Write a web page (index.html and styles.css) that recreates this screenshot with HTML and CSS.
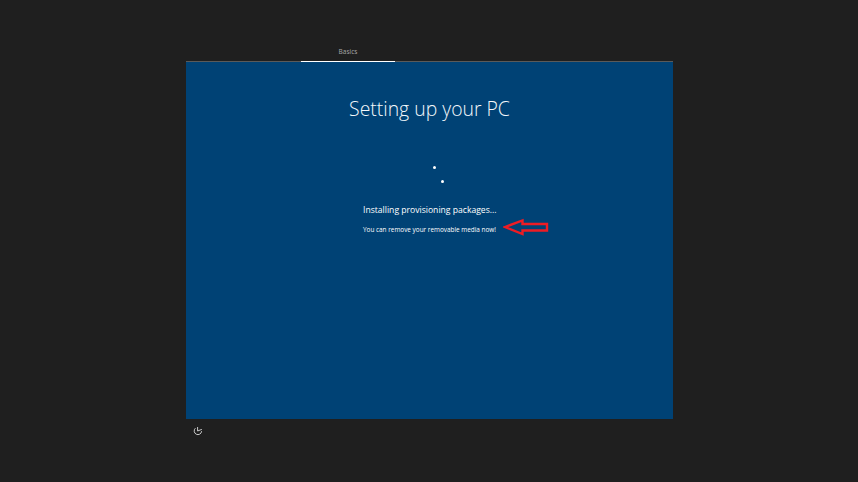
FILE: index.html
```html
<!DOCTYPE html>
<html lang="en">
<head>
<meta charset="utf-8">
<title>Setting up your PC</title>
<link rel="stylesheet" href="styles.css">
</head>
<body>
<div class="frame">
  <div class="tabs">
    <div class="tab">Basics</div>
  </div>
  <main class="panel">
    <h1 class="title">Setting up your PC</h1>
    <div class="spinner">
      <span class="dot dot-a"></span>
      <span class="dot dot-b"></span>
    </div>
    <div class="status">
      <p class="status-main">Installing provisioning packages...</p>
      <p class="status-note">You can remove your removable media now!</p>
      <svg class="arrow" width="46" height="18" viewBox="0 0 46 18" aria-hidden="true">
        <path d="M2 9 L19.5 2.5 V6 H44 V12.5 H19.5 V16 Z" fill="none" stroke="#ed1c24" stroke-width="2.4"/>
      </svg>
    </div>
  </main>
  <footer class="foot">
    <svg class="power" width="10" height="10" viewBox="0 0 10 10" aria-hidden="true">
      <path d="M2.4 2.2 A3.7 3.7 0 1 0 8.6 5.2" fill="none" stroke="#dcdcdc" stroke-width="0.9"/>
      <path d="M4.6 1 V5 L8.8 3.4" fill="none" stroke="#dcdcdc" stroke-width="0.9"/>
    </svg>
  </footer>
</div>
</body>
</html>
```

FILE: styles.css
```css
* { box-sizing: border-box; }
html, body { height: 100%; }
body {
  margin: 0;
  background: #1f1f1f;
  color: #fff;
  font-family: "Open Sans", "Liberation Sans", sans-serif;
  overflow: hidden;
}
.frame {
  width: 487px;
  margin: 0 0 0 186px;
  padding-top: 46px;
}
.tabs {
  height: 16px;
  padding-left: 115px;
  border-bottom: 1px solid #5a5a5a;
}
.tab {
  width: 94px;
  height: 16px;
  border-bottom: 1px solid #fff;
  font-size: 6.5px;
  line-height: 12px;
  text-align: center;
  color: #a8a8a8;
}
.panel {
  height: 357px;
  background: #004275;
  display: flex;
  flex-direction: column;
  align-items: center;
}
.title {
  margin: 33px 0 0;
  font-size: 19.4px;
  line-height: 28px;
  font-weight: 300;
  color: #f4f8fb;
}
.spinner {
  position: relative;
  width: 48px;
  height: 24px;
  margin-top: 42px;
}
.dot {
  position: absolute;
  width: 3px;
  height: 3px;
  border-radius: 50%;
  background: #fff;
}
.dot-a { left: 27.5px; top: 1px; }
.dot-b { left: 35.5px; top: 15px; }
.status {
  position: relative;
  width: 133px;
  margin-top: 15px;
  white-space: nowrap;
}
.status-main {
  margin: 0;
  font-size: 8.6px;
  line-height: 12px;
}
.status-note {
  margin: 8.5px 0 0;
  font-size: 6.4px;
  line-height: 9px;
}
.arrow {
  position: absolute;
  left: 140px;
  top: 14px;
}
.foot {
  height: 24px;
  padding: 7px 0 0 7px;
}
.power { display: block; }
```
